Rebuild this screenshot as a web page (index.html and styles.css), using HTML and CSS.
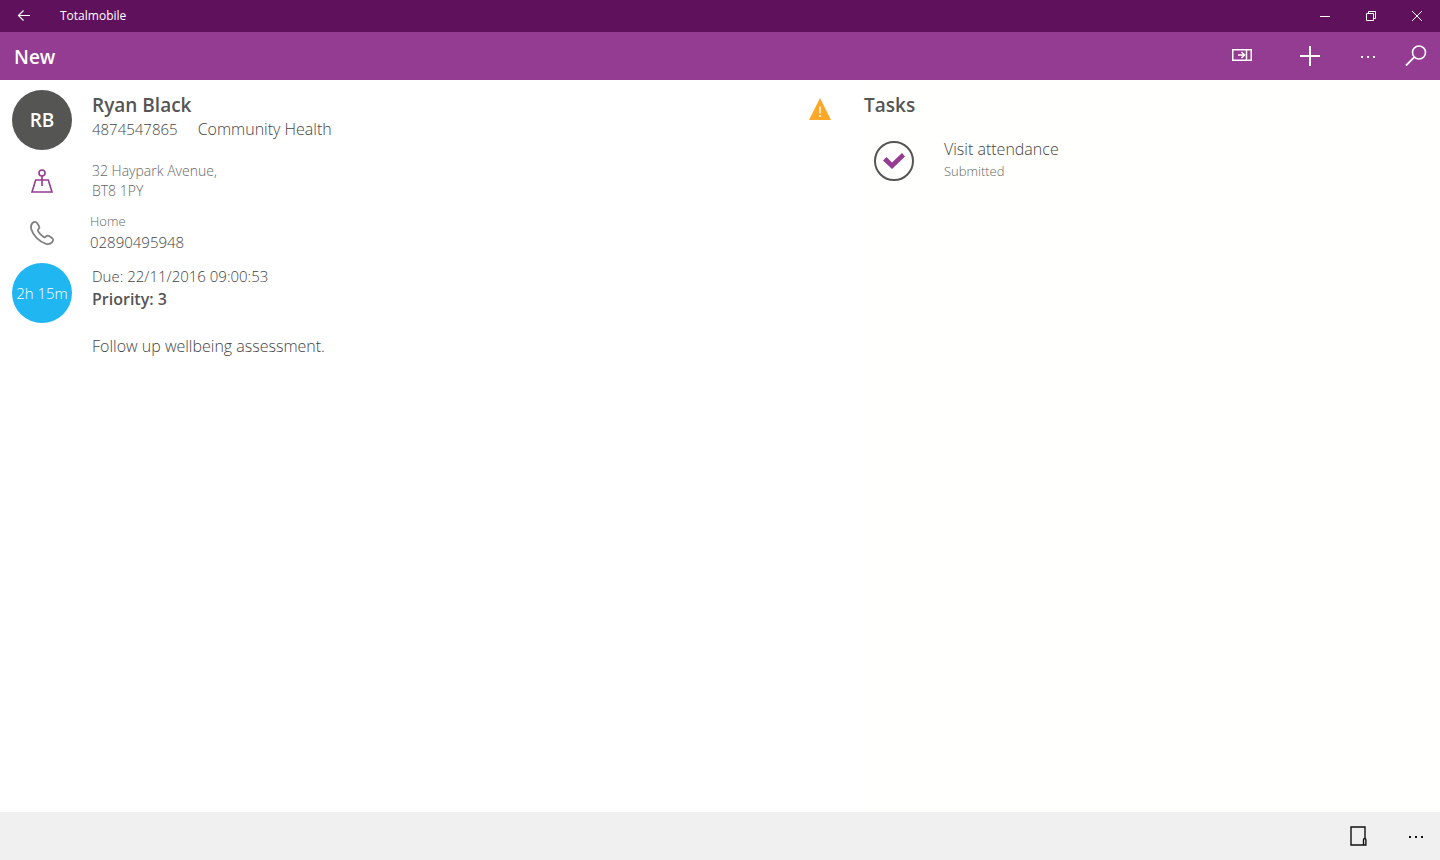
FILE: index.html
```html
<!DOCTYPE html>
<html lang="en">
<head>
    <meta charset="UTF-8">
    <meta name="viewport" content="width=device-width, initial-scale=1.0">
    <title>Totalmobile</title>
    <link rel="stylesheet" href="styles.css">
</head>
<body>
    <header class="titlebar">
        <button class="back-btn" aria-label="Back">
            <svg width="14" height="12" viewBox="0 0 14 12"><path stroke-width="1.200" d="M13 5.500H1.500M6.500 0.500l-5 5 5 5"/></svg>
        </button>
        <span class="app-name">Totalmobile</span>
        <button class="window-btn" aria-label="Minimize">
            <svg width="12" height="12" viewBox="0 0 12 12"><path d="M1 6.500h10"/></svg>
        </button>
        <button class="window-btn" aria-label="Restore">
            <svg width="12" height="12" viewBox="0 0 12 12"><path d="M1.500 3.500h7v7h-7zM3.500 3.500v-2h7v7h-2"/></svg>
        </button>
        <button class="window-btn" aria-label="Close">
            <svg width="12" height="12" viewBox="0 0 12 12"><path d="M1 1l10 10M11 1L1 11"/></svg>
        </button>
    </header>

    <nav class="toolbar">
        <h1>New</h1>
        <button class="tool-btn" aria-label="Open pane">
            <svg width="20" height="14" viewBox="0 0 20 14"><path stroke-width="1.500" d="M0.750 0.750h18.500v10.500h-18.500zM14.500 1v10M6 6h6M9.500 3l3 3-3 3"/></svg>
        </button>
        <button class="tool-btn" aria-label="Add">
            <svg width="20" height="20" viewBox="0 0 20 20"><path stroke-width="2" d="M10 0v20M0 10h20"/></svg>
        </button>
        <button class="more-btn" aria-label="More">
            <svg width="16" height="4" viewBox="0 0 16 4"><path stroke-width="2" d="M1 3h2M7 3h2M13 3h2"/></svg>
        </button>
        <button class="more-btn" aria-label="Search">
            <svg width="22" height="22" viewBox="0 0 22 22"><circle cx="14" cy="7.500" r="6.500" stroke-width="1.600"/><path stroke-width="1.800" d="M9.300 12.200L1 20.500"/></svg>
        </button>
    </nav>

    <main class="content">
        <section class="details">
            <div class="row person">
                <div class="circle initials">RB</div>
                <div class="text">
                    <h2>Ryan Black</h2>
                    <p class="meta"><span class="number">4874547865</span><span>Community Health</span></p>
                </div>
                <svg class="warning" width="22" height="22" viewBox="0 0 22 22"><path fill="#ffa726" d="M11 0l11 22H0z"/><path stroke="#fff" stroke-width="1.400" d="M11 8.500v7M11 17v2"/></svg>
            </div>
            <div class="row address">
                <svg class="map-icon" width="22" height="24" viewBox="0 0 22 24"><circle cx="11" cy="4" r="3"/><path d="M11 7v10M4.700 11h12.600L21 23H1z"/></svg>
                <p class="text small">32 Haypark Avenue,<br>BT8 1PY</p>
            </div>
            <div class="row phone">
                <svg class="phone-icon" width="24" height="24" viewBox="0 0 24 24"><path d="M2.500 2C4 .5 6 .5 7 2l2 3c.8 1.200.3 2.300-.6 3.200-.8.8-.8 1.500-.2 2.400 1.300 2 3.200 3.900 5.200 5.200.9.600 1.600.6 2.400-.2.9-.9 2-1.400 3.200-.6l3 2c1.500 1 1.400 3-.1 4.400-1.400 1.500-3.500 2-5.900 1.400C9.500 21 3 14.500 1.200 8 .6 5.600 1 3.500 2.500 2z"/></svg>
                <div class="text">
                    <p class="label">Home</p>
                    <p class="number">02890495948</p>
                </div>
            </div>
            <div class="row due">
                <div class="circle duration number">2h 15m</div>
                <div class="text">
                    <p class="number">Due: 22/11/2016 09:00:53</p>
                    <p class="priority">Priority: 3</p>
                    <p class="note">Follow up wellbeing assessment.</p>
                </div>
            </div>
        </section>

        <section class="tasks">
            <h2>Tasks</h2>
            <div class="task">
                <svg width="40" height="40" viewBox="0 0 40 40"><circle cx="20" cy="20" r="19" fill="none" stroke="#555" stroke-width="2"/><path fill="#943b92" d="M9 19.500l3.500-3.500 5.500 5.500L28 12l3 3.500L18 28z"/></svg>
                <div>
                    <p>Visit attendance</p>
                    <p class="label">Submitted</p>
                </div>
            </div>
        </section>
    </main>

    <footer class="bottom-bar">
        <button class="tool-btn" aria-label="Form">
            <svg width="18" height="20" viewBox="0 0 18 20"><path stroke-width="1.400" d="M14.500 19H2V1h14v11.500M14.500 19v-5q0-1.500 1.200-1.500t1.200 1.500v5z"/></svg>
        </button>
        <button class="more-btn" aria-label="More">
            <svg width="16" height="4" viewBox="0 0 16 4"><path stroke-width="2" d="M1 3h2M7 3h2M13 3h2"/></svg>
        </button>
    </footer>
</body>
</html>
```

FILE: styles.css
```css
* {
    box-sizing: border-box;
}
body {
    margin: 0;
    min-height: 100vh;
    display: flex;
    flex-direction: column;
    font-family: "Open Sans", "Noto Sans", sans-serif;
    font-size: 16px;
    font-weight: 300;
    line-height: 23px;
    color: #444;
    background-color: #fff;
}
h1, h2, p {
    margin: 0;
}
h1, h2 {
    font-size: 19px;
    font-weight: 600;
    line-height: 26px;
}
h2 {
    color: #555;
}
button {
    display: flex;
    align-items: center;
    justify-content: center;
    padding: 0;
    border: 0;
    background: none;
    color: inherit;
}
svg {
    flex: none;
    fill: none;
}
button svg {
    stroke: currentColor;
}
.titlebar {
    display: flex;
    height: 32px;
    color: #fff;
    background-color: #5f115c;
}
.back-btn {
    width: 48px;
}
.app-name {
    flex: 1;
    padding-left: 12px;
    font-size: 12px;
    font-weight: 400;
    line-height: 32px;
}
.window-btn {
    width: 46px;
}
.toolbar {
    display: flex;
    align-items: stretch;
    height: 48px;
    color: #fff;
    background-color: #943b92;
}
.toolbar h1 {
    flex: 1;
    padding-left: 14px;
    line-height: 50px;
}
.tool-btn {
    width: 68px;
}
.more-btn {
    width: 48px;
}
.content {
    flex: 1;
    display: grid;
    grid-template-columns: 3fr 2fr;
}
.row {
    display: grid;
    grid-template-columns: 60px 1fr auto;
    column-gap: 20px;
    align-items: start;
}
.details {
    padding: 10px 33px 0 12px;
}
.circle {
    width: 60px;
    height: 60px;
    border-radius: 50%;
    line-height: 60px;
    text-align: center;
    white-space: nowrap;
    color: #fff;
}
.initials {
    font-size: 19px;
    font-weight: 600;
    background-color: #555553;
}
.duration {
    background-color: #1fb6f2;
}
.number {
    font-size: 15px;
}
.meta {
    display: flex;
    gap: 20px;
}
.person .text {
    padding-top: 2px;
}
.warning {
    margin-top: 8px;
}
.address {
    padding-top: 11px;
}
.small {
    font-size: 14px;
    line-height: 20px;
    color: #666;
}
.label {
    font-size: 13px;
    line-height: 20px;
    color: #666;
}
.map-icon {
    justify-self: center;
    margin-top: 8px;
    stroke: #943b92;
    stroke-width: 1.6;
}
.phone {
    padding-top: 10px;
    column-gap: 18px;
}
.phone-icon {
    justify-self: center;
    margin-top: 10px;
    stroke: #808080;
    stroke-width: 1.8;
    overflow: visible;
}
.due {
    padding-top: 9px;
}
.due .text {
    padding-top: 2px;
}
.priority {
    font-weight: 600;
    color: #555;
}
.note {
    margin-top: 24px;
}
.tasks {
    padding-top: 12px;
    background-color: #fffffd;
}
.task {
    display: flex;
    gap: 30px;
    padding: 20px 10px 0;
}
.task svg {
    margin-top: 3px;
}
.bottom-bar {
    display: flex;
    justify-content: flex-end;
    height: 48px;
    color: #111;
    background-color: #f0f0f0;
}
```
